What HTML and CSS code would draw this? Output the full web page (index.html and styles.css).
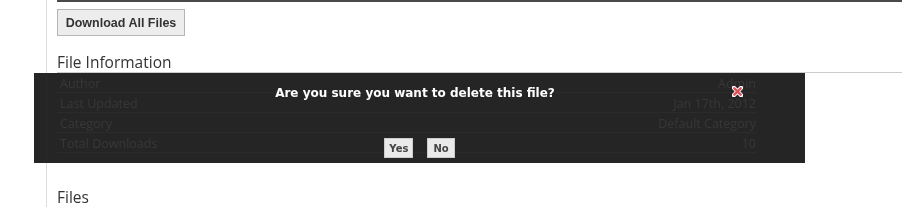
FILE: index.html
```html
<!DOCTYPE html>
<html lang="en">

<head>
  <meta charset="UTF-8" />
  <title>File details</title>
  <link rel="stylesheet" href="styles.css">
</head>

<body>
  <div class="page">
    <div class="content">
      <div class="top-rule"></div>
      <button class="btn">Download All Files</button>

      <h3 class="section-title">File Information</h3>
      <table class="info">
        <tr><td>Author</td><td class="value">Admin</td></tr>
        <tr><td>Last Updated</td><td class="value">Jan 17th, 2012</td></tr>
        <tr><td>Category</td><td class="value">Default Category</td></tr>
        <tr><td>Total Downloads</td><td class="value">10</td></tr>
      </table>

      <h3 class="section-title files">Files</h3>
    </div>

    <!-- confirm dialog -->
    <div class="confirm">
      <a class="close" href="#">
        <svg width="11" height="11" viewBox="0 0 12 12">
          <path d="M2 2 L10 10 M10 2 L2 10" stroke="#fff" stroke-width="4.5" stroke-linecap="round" />
          <path d="M2.5 2.5 L9.5 9.5 M9.5 2.5 L2.5 9.5" stroke="#e0505a" stroke-width="2.6" stroke-linecap="round" />
        </svg>
      </a>
      <p class="confirm-text">Are you sure you want to delete this file?</p>
      <div class="confirm-actions">
        <button class="small-btn">Yes</button>
        <button class="small-btn">No</button>
      </div>
    </div>
  </div>
</body>

</html>
```

FILE: styles.css
```css
html,
body {
  margin: 0;
  padding: 0;
  background: #fff;
}

.page {
  position: relative;
  width: 902px;
  height: 207px;
  overflow: hidden;
}

.content {
  margin-left: 46px;
  border-left: 1px solid #ddd;
  padding-left: 10px;
  height: 207px;
}

.top-rule {
  border-top: 2px solid #4a4a4a;
}

.btn {
  margin-top: 7px;
  height: 27px;
  width: 128px;
  padding: 0;
  background: #ededed;
  border: 1px solid #b4b4b4;
  color: #333;
  font-family: "Liberation Sans", Arial, sans-serif;
  font-weight: bold;
  font-size: 12.5px;
  cursor: pointer;
}

.section-title {
  margin: 0;
  margin-top: 16px;
  font-family: "Open Sans", sans-serif;
  font-weight: normal;
  font-size: 15.5px;
  line-height: 20px;
  color: #333;
  border-bottom: 1px solid #ccc;
}

.section-title.files {
  border-bottom: none;
  margin-top: 36px;
  line-height: 17px;
}

.info {
  width: 700px;
  border-collapse: collapse;
  font-family: "Open Sans", sans-serif;
  font-size: 12.5px;
  color: #777;
}

.info td {
  height: 18px;
  padding: 1px 0 0 3px;
  border-bottom: 1px solid #ccc;
}

.info td.value {
  text-align: right;
  padding: 1px 1px 0 0;
}

/* Dialogo de confirmacion */
.confirm {
  position: absolute;
  left: 34px;
  top: 73px;
  width: 771px;
  height: 90px;
  background: rgba(42, 42, 42, 0.87);
  backdrop-filter: invert(1);
  text-align: center;
}

.close {
  position: absolute;
  left: 698px;
  top: 10px;
}

.confirm-text {
  margin: 0;
  padding-top: 13px;
  padding-right: 9px;
  color: #fff;
  font-family: "DejaVu Sans", Verdana, sans-serif;
  font-weight: bold;
  font-size: 12px;
}

.confirm-actions {
  margin-top: 38px;
  display: flex;
  justify-content: center;
  gap: 14px;
}

.small-btn {
  height: 20px;
  padding: 0 4px;
  margin: 0;
  background: #eaeaea;
  border: 1px solid #ccc;
  color: #444;
  font-family: "DejaVu Sans", Verdana, sans-serif;
  font-weight: bold;
  font-size: 10px;
  cursor: pointer;
}

.small-btn + .small-btn {
  padding: 0 5px;
}
```
